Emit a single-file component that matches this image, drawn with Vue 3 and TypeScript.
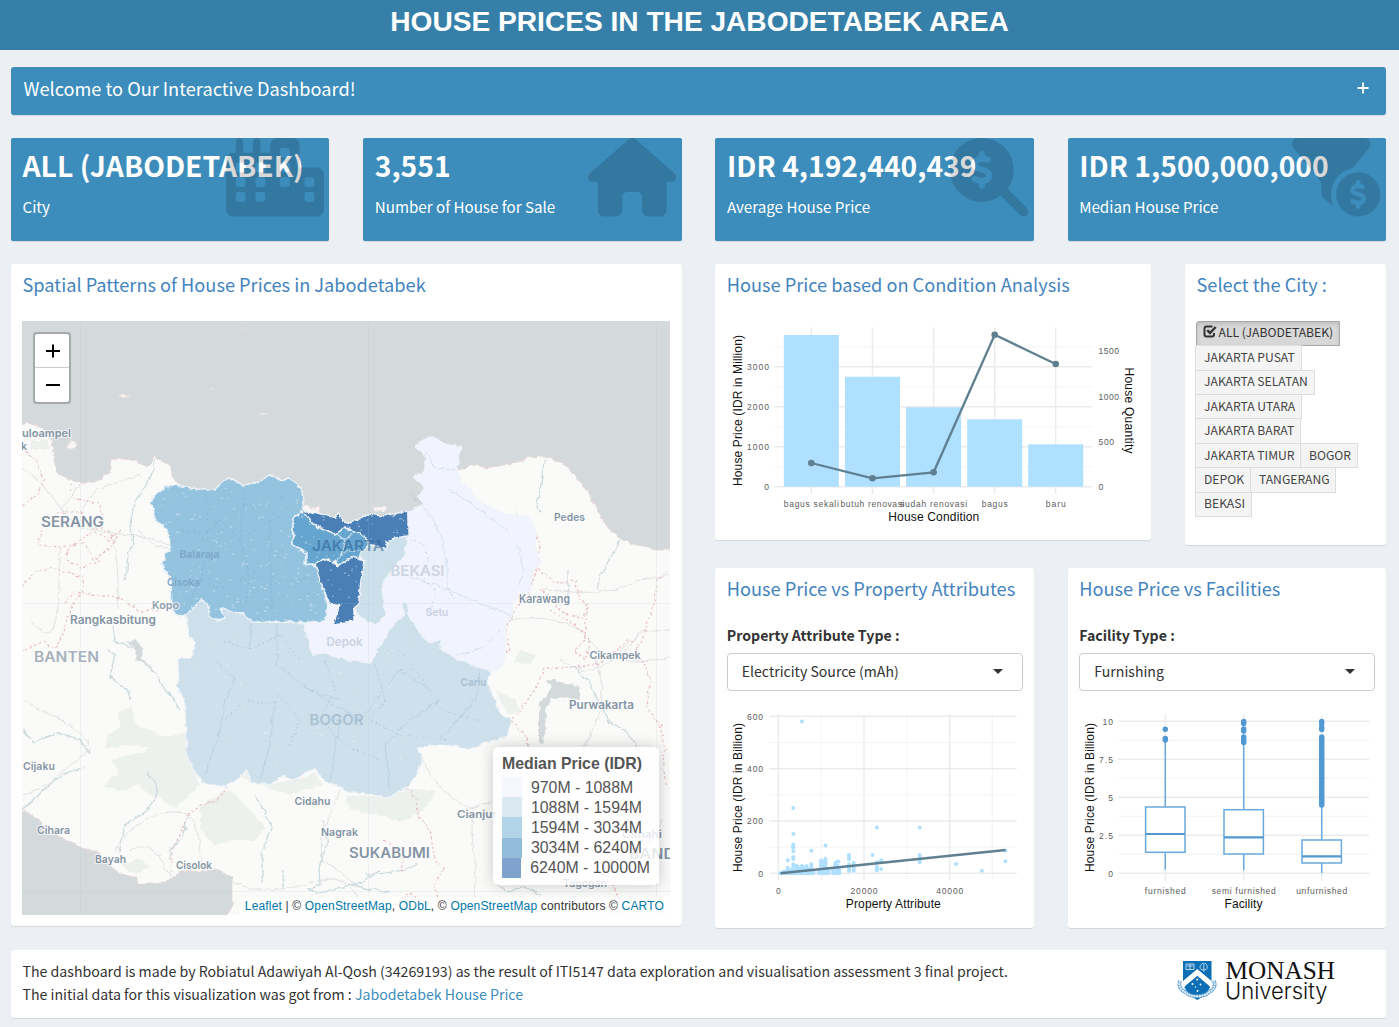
<script setup lang="ts">
interface Label { t: string; x: number; y: number; w: number; s: number; c?: string }

const dollar =
  'M228 104c0-11-9-20-20-20s-20 9-20 20v14c-7.6 1.7-15.2 4.4-22.2 8.5c-13.9 8.3-25.9 22.8-25.8 43.9c.1 20.3 12 33.1 24.7 40.7c11 6.6 24.7 10.8 35.6 14l1.7 .5c12.6 3.8 21.8 6.8 28 10.7c5.1 3.2 5.8 5.4 5.9 8.2c.1 5-1.8 8-5.9 10.5c-5 3.1-12.9 5-21.4 4.7c-11.1-.4-21.5-3.9-35.1-8.5c-2.3-.8-4.7-1.6-7.2-2.4c-10.5-3.5-21.8 2.2-25.3 12.6s2.2 21.8 12.6 25.3c1.9 .6 4 1.3 6.1 2.1c8.3 2.9 17.9 6.2 28.2 8.4V312c0 11 9 20 20 20s20-9 20-20V298.2c8-1.7 16-4.5 23.2-9c14.3-8.9 25.1-24.1 24.8-45c-.3-20.3-11.7-33.4-24.6-41.6c-11.5-7.2-25.9-11.6-37.1-15l-.7-.2c-12.8-3.9-21.9-6.7-28.3-10.5c-5.2-3.1-5.3-4.9-5.3-6.7c0-3.7 1.4-6.5 6.2-9.3c5.4-3.2 13.6-5.1 21.5-5c9.6 .1 20.2 2.2 31.2 5.2c10.7 2.8 21.6-3.5 24.5-14.2s-3.5-21.6-14.2-24.5c-6.5-1.7-13.7-3.4-21.1-4.7V104z'

const stats = [
  { value: 'ALL (JABODETABEK)', label: 'City', icon: 'city', vb: '0 0 640 512' },
  { value: '3,551', label: 'Number of House for Sale', icon: 'house', vb: '0 0 576 512' },
  { value: 'IDR 4,192,440,439', label: 'Average House Price', icon: 'search', vb: '0 0 512 512' },
  { value: 'IDR 1,500,000,000', label: 'Median House Price', icon: 'filter', vb: '0 0 576 512' },
]

const cities = [
  { name: 'ALL (JABODETABEK)', w: 144 },
  { name: 'JAKARTA PUSAT', w: 107 },
  { name: 'JAKARTA SELATAN', w: 120 },
  { name: 'JAKARTA UTARA', w: 107 },
  { name: 'JAKARTA BARAT', w: 106 },
  { name: 'JAKARTA TIMUR', w: 106 },
  { name: 'BOGOR', w: 58 },
  { name: 'DEPOK', w: 56 },
  { name: 'TANGERANG', w: 86 },
  { name: 'BEKASI', w: 57 },
]

const legend = [
  { t: '970M - 1088M', c: '#f7f8ff' },
  { t: '1088M - 1594M', c: '#dbe9f2' },
  { t: '1594M - 3034M', c: '#b1d4e8' },
  { t: '3034M - 6240M', c: '#93bbda' },
  { t: '6240M - 10000M', c: '#7fa3cc' },
]

/* map geometry */
const land =
  'M10 425L22 425L28 423L36 426L43 428L52 440L54 460L57 473L70 480L85 484L100 480L110 470L111 460L117 458L137 461L145 467L152 463L155 454L158 459L170 465L173 477L178 485L202 491L215 490L229 478L243 486L260 483L270 475L282 482L288 479L302 490L303 503L307 511L313 508L319 505L320 514L335 517L338 513L343 522L350 524L370 515L383 517L407 512L418 507L423 503L418 497L425 487L413 477L423 472L426 460L422 452L415 447L428 437L437 439L445 444L461 447L458 460L457 469L467 469L474 464L487 468L510 464L530 457L545 457L562 462L585 487L597 510L608 528L618 537L633 544L657 550L680 550L680 930L228 930L228 915L232 907L232 878L217 870L180 872L170 880L157 883L138 883L135 877L120 874L110 867L100 853L80 847L50 833L37 817L22 810L10 806Z'
const regions = [
  { c: '#cde0eb', d: 'M185 616L202 599L208 605L210 617L218 620L225 618L221 610L223 607L230 612L243 613L252 622L303 623L308 637L312 654L328 654L335 658L343 658L347 661L372 663L377 650L390 630L403 615L403 602L407 602L410 620L418 630L427 642L442 640L440 648L455 658L473 665L490 672L487 683L492 693L500 713L511 720L507 737L487 742L473 749L440 744L417 748L422 758L418 773L407 787L388 797L357 793L342 790L338 785L327 783L313 768L293 780L283 775L273 783L251 783L247 768L240 777L225 787L202 782L193 767L187 757L185 703L177 687L179 677L178 659L192 657L196 643L190 637L187 620Z' },
  { c: '#f1f3fe', d: 'M407 512L418 507L423 503L418 497L425 487L413 477L423 472L426 460L422 452L415 447L428 437L437 439L445 444L461 447L457 469L460 480L467 487L480 502L507 515L530 518L537 533L535 547L540 560L532 573L530 590L512 602L513 613L505 627L505 657L500 667L490 672L473 665L455 658L440 648L442 640L427 642L418 630L410 620L407 602L403 602L403 615L390 630L377 650L372 663L347 661L343 658L335 658L328 654L312 654L308 637L303 623L325 621L330 603L341 604L335 622L353 620L356 613L368 622L376 625L385 618L382 580L388 577L395 565L405 555Z' },
  { c: '#cbe0eb', d: 'M407 535L405 555L395 565L388 577L382 580L383 600L386 615L376 625L368 622L360 616L355 610L360 590L363 562L359 553L368 544L387 548L387 541Z' },
  { c: '#93c3df', d: 'M177 485L164 486L149 503L154 508L154 518L169 533L170 551L164 553L165 560L160 563L171 580L172 610L180 617L185 616L202 599L208 605L210 617L218 620L225 618L221 610L223 607L230 612L243 613L252 622L318 622L325 621L328 607L325 593L320 580L318 570L313 565L305 564L306 553L293 545L293 518L305 511L303 503L302 489L288 478L282 481L270 474L260 482L243 485L229 477L215 489L202 490Z' },
  { c: '#66a5cf', d: 'M293 518L303 512L313 523L335 533L345 527L360 532L369 541L368 546L361 552L359 558L340 566L336 560L329 565L306 565L306 553L293 545Z' },
  { c: '#4a7fb6', d: 'M302 511L322 515L335 517L338 512L343 521L350 523L370 514L383 516L408 511L408 536L395 538L387 541L387 549L372 545L360 533L345 528L335 534L313 524Z' },
  { c: '#4a7fb6', d: 'M315 564L328 559L338 566L352 557L365 561L361 580L359 601L354 609L354 621L333 624L340 605L329 603L324 590L320 581Z' },
]
const borders = [
  'M22 448L35 459L44 481L38 494L22 506', 'M70 484L73 498L100 504L103 520L95 530L80 512L60 512L45 525L37 545L60 547L85 543L93 560L107 550L117 538L100 528',
  'M22 586L38 570L56 568L82 577L83 590L70 610L60 640L55 649L43 642L22 650', 'M64 604L75 592L95 595L120 598L140 611L173 608',
  'M120 530L110 540L92 532L70 547L64 558L80 568L100 561', 'M228 787L215 802L200 805L188 815L187 820L172 850L171 877',
  'M407 787L417 800L418 815L430 830L435 860L445 868L434 885L440 900L450 912', 'M384 840L397 850L404 858L402 872',
  'M535 565L545 575L553 583L575 580L580 600L587 603L583 618L562 612L548 595L540 590', 'M587 603L585 640L575 650L585 660L590 640L575 625L550 610',
  'M573 667L600 664L620 647L627 640L638 645L635 652', 'M573 667L545 668L537 685L520 712L511 720L527 738L528 748', 'M668 571L657 578L655 600L642 640L635 652L645 665L650 680L647 706L660 725L665 750L662 770L667 785',
  'M662 820L655 835L645 845', 'M610 880L620 900L615 912', 'M395 905L410 893L420 900', 'M502 655L510 650L506 630L515 610L528 595L536 570L540 545L533 525',
]
const roads = [
  'M22 468C45 480 62 515 80 528L150 538L170 546', 'M80 512C90 495 97 487 115 483L140 475', 'M110 530C120 560 118 590 118 610', 'M60 510L80 485', 'M138 530L155 546L170 548',
  'M60 545C58 600 62 660 30 620', 'M22 700C50 715 90 730 90 750C60 770 50 790 22 795', 'M115 850C130 820 170 805 188 815C205 830 195 850 205 870', 'M170 877C160 855 150 840 130 850',
  'M511 620C540 615 575 620 590 640S620 665 670 658', 'M540 590C570 590 600 600 640 580L670 575', 'M595 650C600 680 610 700 590 735S600 780 590 800', 'M422 758C430 780 450 800 470 808L500 800', 'M475 808C465 840 485 870 470 915',
  'M340 790C330 820 318 830 322 860C350 875 350 885 370 890', 'M232 880C260 900 300 885 322 880S360 890 360 915', 'M620 660L640 632L670 630', 'M515 510L535 545M560 660C575 665 590 690 630 640',
]
const rivers = [
  'M155 458C155 480 135 495 132 515C125 535 140 540 130 550C125 560 130 565 125 580', 'M113 626L115 641L128 646L140 650L142 660L155 672L165 690L176 702L179 709', 'M108 650L115 655L110 676L130 693L131 700',
  'M22 729L33 742L60 733L80 740L90 754', 'M22 810L50 784L70 771L84 768', 'M147 772L158 787L155 800L145 812L125 826L119 852', 'M187 820L182 838L170 850L172 860',
  'M255 795L265 812L272 828L262 850L262 882', 'M322 820L328 840L319 868L320 885L308 890L320 893L350 885L390 893', 'M545 457L540 490L536 507L542 513', 'M620 540L612 555L600 575L597 590', 'M568 570L568 600',
  'M573 667L588 680L598 700L610 723L625 730L640 750', 'M496 885L510 892L525 887L540 895', 'M365 875L385 873L405 870L418 864', 'M283 870V888', 'M340 888L362 882L380 870',
]
const innerRivers = [
  'M215 660L235 680L225 700L220 730L205 775', 'M277 625L277 665L310 690L340 700', 'M275 700L270 745L260 780', 'M252 620L250 650', 'M310 690L360 720L400 670L430 690', 'M205 560L200 585L215 610', 'M270 520L272 610', 'M340 720L330 780', 'M390 790L385 745L410 720L440 700', 'M440 740L475 700L480 670', 'M425 450L435 468L455 470', 'M518 545L524 570L520 585', 'M455 655L480 650L500 630',
  'M410 495C430 510 448 530 448 590L455 600', 'M406 575C440 585 470 600 511 615', 'M448 490C470 500 490 520 508 530',
]
const innerBorders = [
  'M225 720L245 700L270 705L280 695L300 720L290 745', 'M325 660L335 690L320 720L345 745L380 760', 'M375 665L385 700L370 720L400 735L450 740', 'M220 640L250 650L280 635L300 660', 'M180 530L205 535L220 520L240 540L270 520L285 490', 'M190 600L200 580L230 590L250 570L280 590L310 575', 'M205 500L208 530L195 560', 'M245 490L240 540L250 575L245 605', 'M410 540L425 545L428 560L420 575L435 590L430 620', 'M400 650L430 690L440 710L480 720',
]
const forests = [
  'M118 712L132 706L135 725L150 730L165 738L185 732L188 757L200 785L190 795L175 808L160 798L150 795L140 785L120 790L103 787L120 770L110 760L130 755L145 752L150 748L130 745L105 748L108 735L120 728Z',
  'M200 805L230 790L250 810L265 828L255 840L235 840L215 845L200 830Z', 'M240 777L247 770L250 783L275 783L300 778L315 772L322 785L290 795L270 788Z',
  'M345 795L388 798L408 788L420 790L436 790L425 810L400 822L375 815L350 810Z', 'M520 650L535 655L530 665L515 662Z', 'M30 440L48 440L50 450L30 450Z', 'M495 690L515 700L520 712L508 715Z', 'M120 865L140 858L150 868L135 874Z',
]
let seed = 7
const rnd = () => (seed = (seed * 16807) % 2147483647) / 2147483647
const sparks = Array.from({ length: 210 }, () => ({ x: 155 + rnd() * 175, y: 485 + rnd() * 140, w: 0.8 + rnd() * 2 }))
const sparks2 = Array.from({ length: 110 }, () => ({ x: 300 + rnd() * 108, y: 512 + rnd() * 110, w: 0.8 + rnd() * 1.6 }))
const sparks3 = Array.from({ length: 55 }, () => ({ x: 190 + rnd() * 230, y: 630 + rnd() * 150, w: 0.8 + rnd() * 1.6 }))

const places: Label[] = [
  { t: 'uloampel', x: 22, y: 437, w: 49, s: 11 }, { t: 'k', x: 21, y: 450, w: 6, s: 10 },
  { t: 'SERANG', x: 41, y: 527, w: 63, s: 14 }, { t: 'Rangkasbitung', x: 70, y: 624, w: 86, s: 11.5 },
  { t: 'BANTEN', x: 34, y: 662, w: 65, s: 14.5, c: '#a6b1bb' }, { t: 'Cijaku', x: 23, y: 769.5, w: 32, s: 11 },
  { t: 'Cihara', x: 37, y: 834, w: 33, s: 11 }, { t: 'Bayah', x: 95, y: 862.5, w: 31, s: 11 },
  { t: 'Cisolok', x: 176, y: 869, w: 36, s: 11 }, { t: 'Cidahu', x: 294.5, y: 804.5, w: 36, s: 11 },
  { t: 'Nagrak', x: 321, y: 836, w: 37, s: 11 }, { t: 'SUKABUMI', x: 349, y: 858, w: 81, s: 14 },
  { t: 'Cianjur', x: 457, y: 818, w: 40, s: 11 }, { t: 'Purwakarta', x: 569, y: 708.5, w: 65, s: 11.5 },
  { t: 'Cikampek', x: 589.5, y: 659, w: 51, s: 11 }, { t: 'Karawang', x: 519, y: 602.5, w: 51, s: 11.5 },
  { t: 'Pedes', x: 554, y: 520.5, w: 31, s: 11 }, { t: 'Kopo', x: 152, y: 608.5, w: 27, s: 11, c: '#8fa0b0' },
  { t: 'Tagogan', x: 563, y: 887, w: 44, s: 10 }, { t: 'BANDUNG', x: 629, y: 859, w: 82, s: 14 }, { t: 'Cimahi', x: 622, y: 837.5, w: 40, s: 10.5 },
]
const inner: Label[] = [
  { t: 'Balaraja', x: 179.5, y: 557.5, w: 40, s: 11, c: '#7ea7c8' }, { t: 'Cisoka', x: 167, y: 586, w: 33, s: 11, c: '#7ea7c8' },
  { t: 'JAKARTA', x: 312, y: 551, w: 72, s: 15, c: '#2f6398' }, { t: 'BEKASI', x: 390.5, y: 576, w: 54, s: 14, c: '#cdd4e2' },
  { t: 'Setu', x: 425.5, y: 616, w: 23, s: 11, c: '#cad2e3' }, { t: 'Depok', x: 326.5, y: 646, w: 36, s: 11.5, c: '#cad2e3' },
  { t: 'BOGOR', x: 309.5, y: 725, w: 54, s: 14, c: '#a9c1d3' }, { t: 'Cariu', x: 460.5, y: 685.5, w: 26, s: 11, c: '#a9c1d3' },
]

/* chart data */
const bars = [
  { n: 'bagus sekali', x: 811.3, top: 335, q: 463, w: 55 }, { n: 'butuh renovasi', x: 872.5, top: 376.7, q: 478.3, w: 64 },
  { n: 'sudah renovasi', x: 933.6, top: 407.3, q: 472.3, w: 67 }, { n: 'bagus', x: 994.7, top: 419.3, q: 334.7, w: 26 }, { n: 'baru', x: 1055.7, top: 444.3, q: 364, w: 20 },
]
const barLine = bars.map((b) => `${b.x},${b.q}`).join(' ')
const px = (v: number) => 778.3 + v * 0.004285
const py = (v: number) => 873.3 - v * 0.2617
const pts: number[][] = [
  [5500, 580], [3500, 250], [3500, 150], [3500, 110], [3500, 103], [3500, 98], [3500, 84], [3500, 62], [3500, 55], [2200, 50], [7700, 86], [11000, 106],
  [23000, 175], [33000, 175], [22000, 70], [33000, 70], [33000, 60], [33000, 50], [33000, 42], [41500, 36], [47500, 10], [53000, 86], [53000, 46],
  [16500, 70], [16500, 62], [16500, 54], [16500, 35], [16500, 28], [16500, 22], [16500, 15], [16500, 9], [17600, 40], [17600, 30], [17600, 18], [17600, 10],
  [23000, 42], [23000, 25], [23000, 18], [23000, 11], [24000, 50], [24000, 44], [24000, 16], [14000, 45], [13500, 42], [13200, 36], [13800, 30],
]
const cols: number[][] = [[400, 3], [900, 6], [1300, 10], [1800, 12], [2200, 26], [2700, 14], [3100, 20], [3500, 40], [3900, 32], [4400, 30], [5000, 22], [5500, 34], [6000, 22], [6600, 30], [7100, 20], [7700, 35], [8200, 12], [9500, 14], [10000, 50], [10600, 46], [11000, 56], [11700, 14], [12800, 14], [13200, 24], [13700, 24], [14200, 14]]
cols.forEach(([x, m]) => { for (let v = 0; v <= m; v += 7) pts.push([x, v]) })

const boxes = [
  { n: 'furnished', x: 1165.3, q3: 807, q1: 852.3, m: 834, lo: 869.7, hi: 742, w: 41, out: [729.3, 738.5, 740] },
  { n: 'semi furnished', x: 1243.7, q3: 809.7, q1: 854, m: 837.3, lo: 870.3, hi: 744, w: 64, out: [721.5, 723.5, 729, 731, 737, 739, 741, 742.5] },
  { n: 'unfurnished', x: 1321.7, q3: 840, q1: 863, m: 856.3, lo: 873, hi: 804, w: 51, out: [721.5, 724, 727.5, 729.5, ...Array.from({ length: 43 }, (_, i) => 737 + i * 1.62)] },
]
</script>

<template>
  <div class="page">
    <header class="top"><h1>HOUSE PRICES IN THE JABODETABEK AREA</h1></header>
    <main>
      <section class="welcome box blue">
        <span>Welcome to Our Interactive Dashboard!</span>
        <svg width="12" height="12" viewBox="0 0 12 12"><path d="M6 .5V11.5M.5 6H11.5" stroke="#fff" stroke-width="1.8" /></svg>
      </section>

      <section class="stats">
        <div v-for="s in stats" :key="s.icon" class="stat blue">
          <div class="value">{{ s.value }}</div>
          <div class="label">{{ s.label }}</div>
          <svg class="ico" :class="s.icon" :viewBox="s.vb" fill-rule="evenodd">
            <path v-if="s.icon === 'city'" d="M480 48c0-26.500-21.500-48-48-48H336c-26.500 0-48 21.500-48 48V96H224V24c0-13.300-10.700-24-24-24s-24 10.700-24 24V96H112V24c0-13.300-10.700-24-24-24S64 10.700 64 24V96H48C21.500 96 0 117.500 0 144V464c0 26.500 21.500 48 48 48H592c26.500 0 48-21.500 48-48V240c0-26.500-21.500-48-48-48H480V48zm96 320v32c0 8.800-7.200 16-16 16H528c-8.800 0-16-7.200-16-16V368c0-8.800 7.200-16 16-16h32c8.800 0 16 7.200 16 16zM240 416H208c-8.800 0-16-7.200-16-16V368c0-8.800 7.200-16 16-16h32c8.800 0 16 7.200 16 16v32c0 8.800-7.200 16-16 16zM128 400c0 8.800-7.200 16-16 16H80c-8.800 0-16-7.200-16-16V368c0-8.800 7.200-16 16-16h32c8.800 0 16 7.200 16 16v32zM560 256c8.800 0 16 7.200 16 16v32c0 8.800-7.200 16-16 16H528c-8.800 0-16-7.200-16-16V272c0-8.800 7.200-16 16-16h32zM256 176v32c0 8.800-7.200 16-16 16H208c-8.800 0-16-7.200-16-16V176c0-8.800 7.200-16 16-16h32c8.800 0 16 7.200 16 16zM112 160c8.800 0 16 7.200 16 16v32c0 8.800-7.200 16-16 16H80c-8.800 0-16-7.200-16-16V176c0-8.800 7.200-16 16-16h32zM256 304c0 8.800-7.200 16-16 16H208c-8.800 0-16-7.200-16-16V272c0-8.800 7.200-16 16-16h32c8.800 0 16 7.200 16 16v32zM112 320H80c-8.800 0-16-7.200-16-16V272c0-8.800 7.200-16 16-16h32c8.800 0 16 7.200 16 16v32c0 8.800-7.200 16-16 16zm304-48v32c0 8.800-7.200 16-16 16H368c-8.800 0-16-7.200-16-16V272c0-8.800 7.200-16 16-16h32c8.800 0 16 7.200 16 16zM400 64c8.800 0 16 7.200 16 16v32c0 8.800-7.200 16-16 16H368c-8.800 0-16-7.200-16-16V80c0-8.800 7.200-16 16-16h32zm16 112v32c0 8.800-7.200 16-16 16H368c-8.800 0-16-7.200-16-16V176c0-8.800 7.200-16 16-16h32c8.800 0 16 7.200 16 16z" />
            <path v-else-if="s.icon === 'house'" d="M575.800 255.500c0 18-15 32.100-32 32.100h-32l.7 160.200V472c0 22.100-17.900 40-40 40H392c-22.100 0-40-17.900-40-40V384c0-17.700-14.300-32-32-32H256c-17.700 0-32 14.300-32 32v88c0 22.100-17.900 40-40 40H104c-22.100 0-40-17.900-40-40V287.600H32c-18 0-32-14-32-32.100c0-9 3-17 10-24L266.400 8c7-7 15-8 22-8s15 2 21 7L564.800 231.500c8 7 12 15 11 24z" />
            <path v-else-if="s.icon === 'search'" :d="'M416 208c0 45.900-14.900 88.300-40 122.700L502.600 457.400c12.500 12.500 12.500 32.800 0 45.300s-32.800 12.500-45.300 0L330.700 376c-34.400 25.200-76.800 40-122.700 40C93.100 416 0 322.900 0 208S93.100 0 208 0S416 93.100 416 208z' + dollar" />
            <template v-else>
              <path d="M3.900 22.900C10.500 8.900 24.500 0 40 0H472c15.500 0 29.500 8.900 36.100 22.900s4.600 30.500-5.200 42.500L396.400 195.600C316.200 212.100 256 283 256 368c0 27.400 6.300 53.400 17.500 76.500c-1.600-.8-3.200-1.800-4.700-2.900l-64-48c-8.100-6-12.800-15.500-12.800-25.600V288.900L9 65.300C-.7 53.400-2.800 36.800 3.900 22.900z" />
              <path transform="translate(273.900 209.900) scale(.76)" :d="'M18.500 208a189.500 189.500 0 1 0 379 0a189.500 189.500 0 1 0 -379 0z' + dollar" />
            </template>
          </svg>
        </div>
      </section>

      <section class="body">
        <div class="box card mapcard">
          <h2>Spatial Patterns of House Prices in Jabodetabek</h2>
          <div class="map">
            <svg width="648" height="594" viewBox="22 321 648 594">
              <defs>
                <filter id="rough" x="-5%" y="-5%" width="110%" height="110%" color-interpolation-filters="sRGB"><feTurbulence type="fractalNoise" baseFrequency="0.15" numOctaves="3" seed="4" /><feDisplacementMap in="SourceGraphic" scale="5" xChannelSelector="R" yChannelSelector="G" /></filter>
                <clipPath id="tang"><path :d="regions[3].d" /></clipPath>
                <clipPath id="jak"><path :d="regions[5].d + regions[6].d + regions[4].d" /></clipPath>
              </defs>
              <rect x="22" y="321" width="648" height="594" fill="#d4dadc" />
              <g filter="url(#rough)" fill="none" stroke-linejoin="round">
                <path :d="land" fill="#fafaf8" stroke="#e8d3d5" stroke-width=".7" />
                <g fill="#edf1ee"><path v-for="d in forests" :key="d" :d="d" /></g>
                <g stroke="#e1e2e3" stroke-width="1"><path v-for="d in roads" :key="d" :d="d" /></g>
                <g stroke="#c9d8df" stroke-width="1.2"><path v-for="d in rivers" :key="d" :d="d" /></g>
                <g stroke="#e6bfc7" stroke-width="1.2" stroke-dasharray="2.500 2.300"><path v-for="d in borders" :key="d" :d="d" /></g>
                <path d="M546 681L553 679L562 683L580 687L580 700L565 697L550 699L546 710L545 735L543 745L539 742L539 710L540 703L548 695L552 687Z" fill="#d4dadc" />
                <path d="M125 642L135 640L142 648L141 658L148 664L157 675L152 671L142 661L134 661L137 654L134 647Z" fill="#d4dadc" />
                <g fill="#f8f5f4" stroke="#eedadd" stroke-width=".5">
                  <ellipse cx="72" cy="445" rx="5.500" ry="5" /><path d="M117 395L122 394L130 396L124 397ZM209 389L213 389L216 391M257 415L263 413L268 414M256 366L262 369M293 462L300 463M238 323L243 322M248 327M239 327L247 330M227 350L231 350M250 443L254 448M301 510L307 504L312 510L318 506L319 515ZM373 507L387 507L387 510L375 511ZM220 392L226 393M235 399L238 400M223 456L224 455" />
                </g>
                <path v-for="(r, i) in regions" :key="i" :d="r.d" :fill="r.c" stroke="#edf3f8" :stroke-width="i > 2 ? 1.500 : 1" />
                <g stroke="#6f9fc5" stroke-opacity=".22" stroke-width="1"><path v-for="d in innerRivers" :key="d" :d="d" /></g>
                <g stroke="#5f86b4" stroke-opacity=".25" stroke-width=".9" stroke-dasharray="2 2.500"><path v-for="d in innerBorders" :key="d" :d="d" /></g>
                <path d="M335 533L345 540L343 552L336 560M345 540L352 534M343 552L361 550" stroke="#c9deee" stroke-width="1.200" />
              </g>
              <g clip-path="url(#tang)" fill="#d2e5f3" fill-opacity=".65"><rect v-for="(p, i) in sparks" :key="i" :x="p.x" :y="p.y" :width="p.w" height="1.200" /></g>
              <g clip-path="url(#jak)" fill="#bcd6ec" fill-opacity=".7"><rect v-for="(p, i) in sparks2" :key="i" :x="p.x" :y="p.y" :width="p.w" height="1.100" /></g>
              <g fill="#eef5fa" fill-opacity=".7"><rect v-for="(p, i) in sparks3" :key="i" :x="p.x" :y="p.y" :width="p.w" height="1" /></g>
              <path d="M80.500 321V915M368.500 321V915M656.500 321V915M22 603.500H670M22 891.500H670" stroke="#9fc0c8" stroke-opacity=".15" />
              <g class="place">
                <text v-for="p in places" :key="p.t" :x="p.x" :y="p.y" :font-size="p.s" :textLength="p.w" lengthAdjust="spacingAndGlyphs" :fill="p.c || '#8494a4'" stroke="#fff" stroke-opacity=".7" stroke-width="2" paint-order="stroke">{{ p.t }}</text>
                <text v-for="p in inner" :key="p.t" :x="p.x" :y="p.y" :font-size="p.s" :textLength="p.w" lengthAdjust="spacingAndGlyphs" :fill="p.c" :fill-opacity="p.t === 'JAKARTA' ? 0.6 : 1">{{ p.t }}</text>
              </g>
            </svg>
            <div class="zoomer">
              <div><svg width="14" height="14" viewBox="0 0 14 14"><path d="M7 .5V13.500M0 7H14" stroke="#000" stroke-width="2" /></svg></div>
              <div><svg width="14" height="14" viewBox="0 0 14 14"><path d="M0 7H14" stroke="#000" stroke-width="2" /></svg></div>
            </div>
            <div class="legend">
              <b>Median Price (IDR)</b>
              <div v-for="l in legend" :key="l.t" class="lrow"><i :style="{ background: l.c }"></i><span>{{ l.t }}</span></div>
            </div>
            <div class="attrib"><a>Leaflet</a> | © <a>OpenStreetMap</a>, <a>ODbL</a>, © <a>OpenStreetMap</a> contributors © <a>CARTO</a></div>
          </div>
        </div>

        <div class="right">
          <div class="rtop">
            <div class="box card cond">
              <h2>House Price based on Condition Analysis</h2>
              <svg class="chart" width="412" height="208" viewBox="727 321 412 208">
                <g stroke="#ebebeb" stroke-width="1.400">
                  <path v-for="y in [486.7, 446.7, 406.7, 366.7]" :key="y" :d="`M775 ${y}H1092.300`" />
                  <path v-for="b in bars" :key="b.n" :d="`M${b.x} 327.300V494`" />
                </g>
                <path v-for="y in [466.7, 426.7, 386.7, 346.7]" :key="y" :d="`M775 ${y}H1092.300`" stroke="#f1f1f1" stroke-width=".8" />
                <rect v-for="b in bars" :key="b.n" :x="b.x - 27.5" :y="b.top" width="55" :height="486.7 - b.top" fill="#b0e0ff" />
                <polyline :points="barLine" fill="none" stroke="#607f90" stroke-width="2.300" />
                <circle v-for="b in bars" :key="b.n" :cx="b.x" :cy="b.q" r="3.300" fill="#607f90" />
                <g class="tick">
                  <text v-for="(v, i) in [0, 1000, 2000, 3000]" :key="v" x="769" :y="489.7 - i * 40" text-anchor="end" :textLength="i ? 22 : 5">{{ v }}</text>
                  <text v-for="(v, i) in [0, 500, 1000, 1500]" :key="v" x="1098.500" :y="489.7 - i * 45.1" :textLength="[5, 15.500, 20.500, 20.500][i]">{{ v }}</text>
                  <text v-for="b in bars" :key="b.n" :x="b.x" y="507" text-anchor="middle" :textLength="b.w">{{ b.n }}</text>
                </g>
                <g class="axis">
                  <text x="933.800" y="521" text-anchor="middle" textLength="91">House Condition</text>
                  <text transform="translate(742 410.500) rotate(-90)" text-anchor="middle" textLength="151">House Price (IDR in Million)</text>
                  <text transform="translate(1124.500 410.500) rotate(90)" text-anchor="middle" textLength="86">House Quantity</text>
                </g>
              </svg>
            </div>
            <div class="box card citycard">
              <h2>Select the City :</h2>
              <div class="btns">
                <button v-for="(c, i) in cities" :key="c.name" :class="{ on: i === 0 }" :style="{ width: c.w + 'px' }">
                  <svg v-if="i === 0" width="14" height="13" viewBox="0 0 14 13" fill="none" stroke="#333"><path d="M9.500 1.500H3.500Q1.500 1.500 1.500 3.500V9.500Q1.500 11.500 3.500 11.500H9Q11 11.500 11 9.500V8" stroke-width="2" /><path d="M4.200 5.200L7 8L12.700 2" stroke-width="2.500" /></svg>{{ c.name }}
                </button>
              </div>
            </div>
          </div>

          <div class="rbot">
            <div class="box card">
              <h2>House Price vs Property Attributes</h2>
              <label>Property Attribute Type :</label>
              <div class="select"><span>Electricity Source (mAh)</span><i></i></div>
              <svg class="chart2" width="296" height="208" viewBox="727 708 296 208">
                <g stroke="#ebebeb" stroke-width="1.400"><path v-for="y in [873.3, 821, 768.7, 716.3]" :key="y" :d="`M769.300 ${y}H1016.700`" /><path v-for="x in [778.3, 864, 949.7]" :key="x" :d="`M${x} 714V880.700`" /></g>
                <g stroke="#f0f0f0" stroke-width=".8"><path v-for="y in [847.2, 794.8, 742.5]" :key="y" :d="`M769.300 ${y}H1016.700`" /><path v-for="x in [821.3, 906.7, 992.3]" :key="x" :d="`M${x} 714V880.700`" /></g>
                <circle v-for="(p, i) in pts" :key="i" :cx="px(p[0])" :cy="py(p[1])" r="2" fill="#b0e0ff" />
                <path d="M780.500 873.300L1005.500 850" stroke="#607f90" stroke-width="2.500" />
                <g class="tick">
                  <text v-for="(v, i) in [0, 200, 400, 600]" :key="v" x="763" :y="876.5 - i * 52.3" text-anchor="end" :textLength="i ? 16 : 5">{{ v }}</text>
                  <text x="778.300" y="893.700" text-anchor="middle">0</text><text x="864" y="893.700" text-anchor="middle" textLength="27">20000</text><text x="949.700" y="893.700" text-anchor="middle" textLength="27">40000</text>
                </g>
                <g class="axis"><text x="893.300" y="908" text-anchor="middle" textLength="95">Property Attribute</text><text transform="translate(742 797.500) rotate(-90)" text-anchor="middle" textLength="149">House Price (IDR in Billion)</text></g>
              </svg>
            </div>
            <div class="box card">
              <h2>House Price vs Facilities</h2>
              <label>Facility Type :</label>
              <div class="select"><span>Furnishing</span><i></i></div>
              <svg class="chart2" width="296" height="208" viewBox="1079 708 296 208">
                <g stroke="#ebebeb" stroke-width="1.400"><path v-for="i in 5" :key="i" :d="`M1118.300 ${911.3 - i * 38}H1369`" /><path v-for="b in boxes" :key="b.n" :d="`M${b.x} 714V880.700`" /></g>
                <path v-for="i in 4" :key="i" :d="`M1118.300 ${892.3 - i * 38}H1369`" stroke="#f0f0f0" stroke-width=".8" />
                <g v-for="b in boxes" :key="b.n" stroke="#6aa9da" stroke-width="1.500" fill="#fff">
                  <path :d="`M${b.x} ${b.lo}V${b.q1}M${b.x} ${b.q3}V${b.hi}`" />
                  <rect :x="b.x - 19.7" :y="b.q3" width="39.400" :height="b.q1 - b.q3" />
                  <path :d="`M${b.x - 19.7} ${b.m}H${b.x + 19.7}`" stroke="#5199d3" stroke-width="2.200" />
                  <circle v-for="(y, i) in b.out" :key="i" :cx="b.x" :cy="y" r="2.700" fill="#5199d3" stroke="none" />
                </g>
                <g class="tick">
                  <text v-for="(v, i) in ['0', '2.5', '5', '7.5', '10']" :key="v" x="1113" :y="876.5 - i * 38" text-anchor="end" :textLength="[5, 14, 5, 14, 10.500][i]">{{ v }}</text>
                  <text v-for="b in boxes" :key="b.n" :x="b.x" y="893.500" text-anchor="middle" :textLength="b.w">{{ b.n }}</text>
                </g>
                <g class="axis"><text x="1243.500" y="908" text-anchor="middle" textLength="38">Facility</text><text transform="translate(1094 797.500) rotate(-90)" text-anchor="middle" textLength="149">House Price (IDR in Billion)</text></g>
              </svg>
            </div>
          </div>
        </div>
      </section>

      <footer class="box">
        <p>The dashboard is made by Robiatul Adawiyah Al-Qosh (34269193) as the result of ITI5147 data exploration and visualisation assessment 3 final project.<br />The initial data for this visualization was got from : <a>Jabodetabek House Price</a></p>
        <svg class="logo" width="160" height="46" viewBox="1177 959 160 46">
          <path d="M1183 961H1211.500V980Q1211.500 992 1197.300 1000Q1183 992 1183 980Z" fill="#0d6fb5" />
          <path d="M1183 981L1197.300 969L1211.500 981V988L1197.300 976L1183 988Z" fill="#fff" />
          <path d="M1197.300 976L1208.500 985.500L1197.300 996L1186 985.500Z" fill="#0d6fb5" />
          <g fill="none" stroke="#cfe3f2" stroke-width=".9"><path d="M1186 964H1194V969.500H1186ZM1190 964V970M1187 966H1193" /><path d="M1203 963C1198.500 966 1199.500 970 1203.500 970C1208 970 1208.500 966 1205 963M1203.800 963V971.500" /></g>
          <g fill="#fff"><circle cx="1197.300" cy="979.500" r="1" /><circle cx="1192.500" cy="984" r="1" /><circle cx="1200.500" cy="984.500" r=".9" /><circle cx="1197.500" cy="991" r="1" /><circle cx="1195.500" cy="987" r=".7" /></g>
          <path d="M1180 980.500C1178 986 1181 990.500 1186 992.500C1190 997.500 1204 997.500 1208.500 992.500C1213.500 990.500 1216 986 1214 980.500" fill="none" stroke="#5c9fd0" stroke-width="3.600" />
          <path d="M1180 980.500C1178 986 1181 990.500 1186 992.500C1190 997.500 1204 997.500 1208.500 992.500C1213.500 990.500 1216 986 1214 980.500" fill="none" stroke="#e6f1f9" stroke-width="2" stroke-dasharray="2 .6" />
          <text x="1225.500" y="979" font-family="'Liberation Serif', serif" font-size="26" textLength="109.500" lengthAdjust="spacingAndGlyphs" fill="#111">MONASH</text>
          <text x="1225" y="999" font-family="Inter, sans-serif" font-weight="300" font-size="23" textLength="102.500" lengthAdjust="spacingAndGlyphs" fill="#111">University</text>
        </svg>
      </footer>
    </main>
  </div>
</template>

<style>
body { margin: 0; background: #ecf0f5; }
</style>

<style scoped>
.page { width: 1399px; height: 1027px; overflow: hidden; background: #ecf0f5; font-family: "Noto Sans CJK SC", "Noto Sans", sans-serif; color: #333; }
.page * { box-sizing: border-box; }
.top { height: 50px; background: #367fa9; text-align: center; }
h1 { margin: 0; font: bold 28.120px/44px "Liberation Sans", Arial, sans-serif; color: #fff; }
main { padding: 17px 13px 0 11px; }
.box { background: #fff; border-radius: 3px; box-shadow: 0 1px 1px rgba(0, 0, 0, .1); }
.blue { background: #3c8dbc; color: #fff; }
.welcome { height: 48px; padding: 0 17px 6px 12.500px; display: flex; justify-content: space-between; align-items: center; font-size: 18.180px; }
.stats { margin-top: 23px; display: grid; grid-template-columns: repeat(4, minmax(0, 1fr)); gap: 33.900px; }
.stat { position: relative; height: 103px; border-radius: 2px; overflow: hidden; padding: 7px 11.500px; box-shadow: 0 1px 1px rgba(0, 0, 0, .1); white-space: nowrap; }
.value { font-weight: bold; font-size: 28.280px; line-height: 40px; }
.label { font-size: 15.170px; line-height: 24px; margin-top: 9px; }
.ico { position: absolute; top: 0; right: 5.500px; height: 78.500px; fill: rgba(0, 0, 0, .15); }
.body { margin-top: 23px; display: grid; grid-template-columns: minmax(0, 1fr) minmax(0, 1fr); gap: 33.500px; height: 664px; align-items: start; }
.card { padding: 0 11.500px; }
h2 { margin: 0; font-weight: 400; font-size: 18.200px; line-height: 40px; height: 57px; color: #4484be; white-space: nowrap; }
.mapcard { height: 662px; }
.map { position: relative; width: 648px; height: 594px; overflow: hidden; margin-left: -.5px; }
.map > svg { display: block; }
.place { font-family: Inter, sans-serif; font-weight: 600; }
.zoomer { position: absolute; left: 11px; top: 11px; width: 38px; height: 72px; border: 2px solid rgba(0, 0, 0, .22); border-radius: 4px; background: #fff; background-clip: padding-box; }
.zoomer div { height: 34px; display: flex; align-items: center; justify-content: center; padding-left: 1px; }
.zoomer div:first-child { border-bottom: 1px solid #ccc; }
.legend { position: absolute; left: 471px; top: 426px; width: 166px; height: 138px; padding: 7px 9px; border-radius: 5px; background: rgba(255, 255, 255, .8); box-shadow: 0 0 15px rgba(0, 0, 0, .2); font: 15.850px/19px "Liberation Sans", Arial, sans-serif; color: #555; white-space: nowrap; }
.legend b { display: block; height: 23px; }
.lrow { display: flex; height: 20.200px; align-items: center; }
.lrow i { width: 20px; height: 20.200px; margin-right: 9px; }
.attrib { position: absolute; right: 0; bottom: 0; height: 18px; padding: 0 6px 0 5px; background: rgba(255, 255, 255, .7); font: 12px/19px "Liberation Sans", Arial, sans-serif; color: #333; white-space: nowrap; letter-spacing: .17px; }
.attrib a { color: #0078a8; }
.right { display: flex; flex-direction: column; gap: 23px; }
.rtop { display: grid; grid-template-columns: minmax(0, 1fr) 201px; gap: 34px; align-items: start; }
.cond { height: 276px; }
.citycard { height: 281px; }
.chart, .chart2 { display: block; }
.chart2 { margin-top: 17px; }
.tick { font: 8.500px "Liberation Sans", Arial, sans-serif; fill: #5c5c5c; }
.axis { font: 12px "Liberation Sans", Arial, sans-serif; fill: #111; }
.btns { display: flex; flex-wrap: wrap; width: 178px; margin-left: -2px; }
button { height: 25.400px; margin: 0 -1px -1px 0; padding: 0 0 2px 8.500px; border: 1px solid #ddd; background: #f4f4f4; color: #444; font: 12.150px/20px "Noto Sans CJK SC", sans-serif; text-align: left; white-space: nowrap; }
button.on { height: 25px; margin: 0 20px -.7px 1px; padding: 0 0 3px 6px; border-color: #a8a8a8; border-radius: 3px 0 0 0; background: #d8d8d8; box-shadow: inset 0 2px 4px rgba(0, 0, 0, .13); color: #333; }
button.on svg { vertical-align: -1px; margin-right: 2px; }
.rbot { display: grid; grid-template-columns: minmax(0, 1fr) minmax(0, 1fr); gap: 33px; margin-right: -.3px; }
.rbot .card { height: 360px; }
.rbot .card + .card { margin-left: .5px; }
.rbot h2 { height: 56px; }
label { display: block; font-size: 14.150px; font-weight: bold; line-height: 22px; height: 29px; }
.select { height: 38px; border: 1px solid #ccc; border-radius: 4px; padding: 0 19px 2px 14px; display: flex; align-items: center; justify-content: space-between; font-size: 14.100px; }
.select i { border: 5px solid transparent; border-top-color: #333; border-bottom: 0; }
footer { margin-top: 22px; height: 68px; display: flex; justify-content: space-between; padding: 9px 49px 0 11.500px; }
footer p { margin: 1px 0 0; font-size: 14.160px; line-height: 23px; white-space: nowrap; }
footer a { color: #3c8dbc; }
.logo { overflow: visible; }
</style>
